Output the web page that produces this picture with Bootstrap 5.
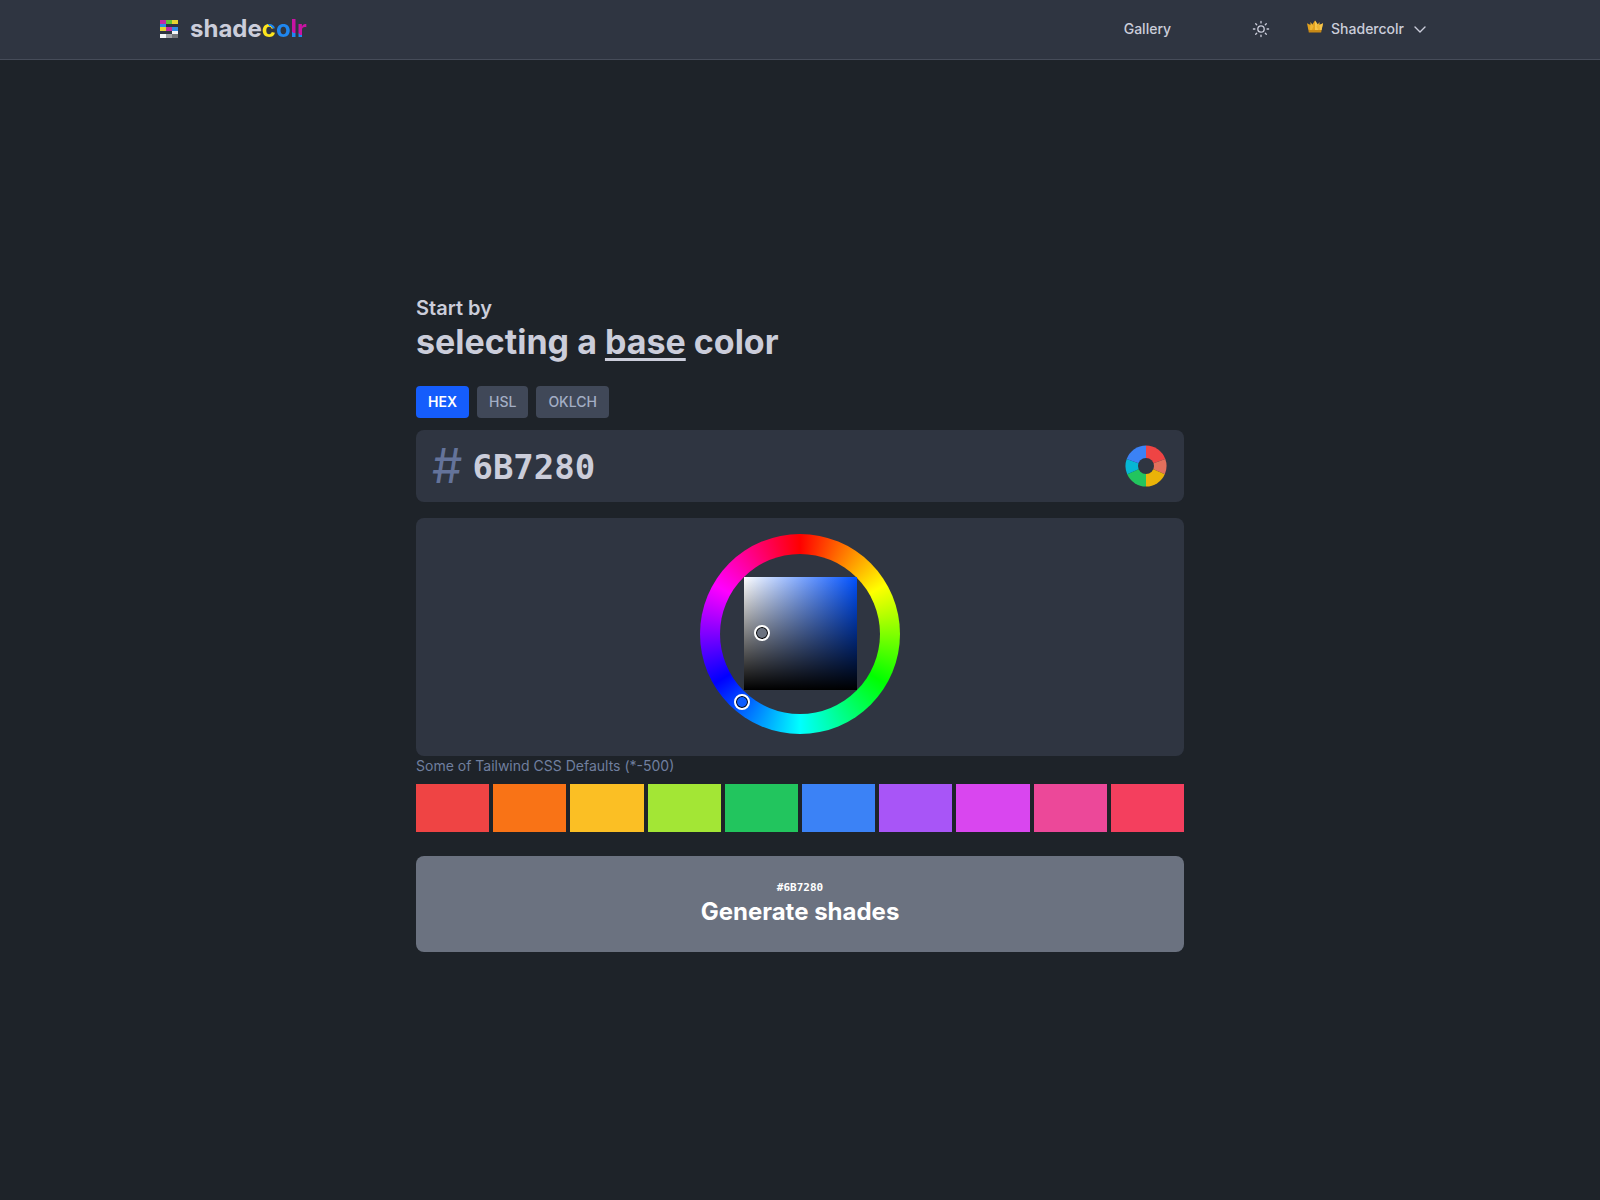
<!DOCTYPE html>
<html lang="en" data-bs-theme="dark">
<head>
<meta charset="utf-8">
<meta name="viewport" content="width=device-width, initial-scale=1">
<title>shadecolr</title>
<link rel="stylesheet" href="https://cdn.jsdelivr.net/npm/bootstrap@5.3.0/dist/css/bootstrap.min.css">
<style>
  :root { --ink: #cbcdda; --panel: #2f3541; --muted: #707f9f; }
  body { font-family: Inter, sans-serif; background: #1e2329; color: var(--ink); font-size: 14px; line-height: 20px; }
  .site-bar { background: var(--panel); border-bottom: 1px solid #464c59; height: 60px; padding: 0 0 2px; }
  .site-inner { max-width: 1280px; }
  .site-bar a, .site-bar button { color: var(--ink); font-weight: 500; text-decoration: none; font-size: 14px; line-height: 20px; }
  .site-bar .wordmark { font-size: 24px; line-height: 32px; font-weight: 700; }
  .tint { background-clip: text; -webkit-background-clip: text; color: transparent; }
  .tint-c { background-image: linear-gradient(40deg, #fde51d 58%, #1f87f0 58%); }
  .tint-o { background-image: linear-gradient(#1f87f0, #1f87f0); }
  .tint-l { background-image: linear-gradient(10deg, #1f87f0 36%, #c913a3 36%); }
  .tint-r { background-image: linear-gradient(30deg, #1f87f0 30%, #c913a3 30%); }
  .theme-btn { margin-left: 80px; margin-right: 36px; }
  .account-btn { margin-right: 12px; }
  .picker { max-width: 768px; padding: 0 0 14px; }
  .page-title { color: inherit; }
  .kicker { font-size: 20px; line-height: 28px; font-weight: 600; }
  .headline { font-size: 34px; line-height: 40px; font-weight: 700; }
  .headline u { text-decoration-thickness: 3px; text-underline-offset: 4px; }
  .mode-btn { --bs-btn-font-size: 14px; --bs-btn-line-height: 20px; --bs-btn-padding-x: 12px; --bs-btn-padding-y: 6px; --bs-btn-border-width: 0; --bs-btn-border-radius: 4px; --bs-btn-font-weight: 500;
    --bs-btn-bg: #404858; --bs-btn-color: #a3aec5; --bs-btn-active-bg: #155dfc; --bs-btn-active-color: #fff; --bs-btn-hover-bg: #4a5366; --bs-btn-hover-color: #fff; }
  .mode-btn.active { --bs-btn-font-weight: 600; }
  .panel-box { background: var(--panel); border-radius: 8px; }
  .hash { font-size: 48px; line-height: 48px; margin: 4px 10px 4px 0; color: #64739a; }
  .hex-field, .hex-field:focus { font-family: "DejaVu Sans Mono", monospace; font-size: 34px; line-height: 40px; font-weight: 700; color: var(--ink); background: transparent; border: 0; padding: 2px 0 0; box-shadow: none; }
  .wheel-panel { padding: 16px 0 22px; }
  .hue-ring { width: 200px; height: 200px; border-radius: 50%; position: relative; background: conic-gradient(red, yellow, lime, cyan, blue, magenta, red); }
  .hue-hole { position: absolute; inset: 20px; border-radius: 50%; background: var(--panel); }
  .shade-square { position: absolute; inset: 43px 43px 44px 44px; background: linear-gradient(to top, #000, transparent), linear-gradient(to right, #fff, #0051ff); }
  .knob { position: absolute; width: 16px; height: 16px; border: 2px solid #fff; border-radius: 50%; box-shadow: inset 0 0 0 1px #000; }
  .knob-shade { left: 54px; top: 91px; background: #6b7280; }
  .knob-hue { left: 34px; top: 160px; background: #0a5cff; }
  .caption-line { color: var(--muted); }
  .swatch { height: 48px; border: 0; padding: 0; }
  .generate, .generate:hover { background: #6b7280; color: #fff; border: 0; border-radius: 8px; padding: 24px; }
  .generate-hex { font-family: "DejaVu Sans Mono", monospace; font-size: 11px; line-height: 16px; font-weight: 700; }
  .generate-text { font-size: 24px; line-height: 32px; font-weight: 700; }
</style>
</head>
<body class="min-vh-100 d-flex flex-column">
<header class="site-bar navbar">
  <nav class="site-inner container-fluid p-0 flex-nowrap">
    <a class="d-flex align-items-center" href="#">
      <svg width="18" height="18" viewBox="0 0 18 18" shape-rendering="crispEdges" aria-hidden="true">
        <path fill="#c32ba5" d="M0 0h6v4H0zM6 7h6v4H6z"/><path fill="#62c435" d="M6 0h6v4H6z"/><path fill="#e6d431" d="M12 0h6v4h-6zM0 7h6v4H0z"/>
        <path fill="#2f8be6" d="M0 4h6v3H0zM12 7h6v4h-6z"/><path fill="#f4f5f7" d="M12 11h6v3h-6zM0 14h6v4H0z"/><path fill="#a2a4a9" d="M6 14h6v4H6z"/><path fill="#75777b" d="M12 14h6v4h-6z"/>
      </svg>
      <span class="wordmark ms-2 ps-1">shade<span class="tint tint-c">c</span><span class="tint tint-o">o</span><span class="tint tint-l">l</span><span class="tint tint-r">r</span></span>
    </a>
    <div class="d-flex align-items-center">
      <a href="#">Gallery</a>
      <button class="theme-btn btn p-0 border-0 d-flex" type="button" aria-label="Switch theme">
        <svg width="20" height="20" viewBox="0 0 20 20" fill="none" stroke="currentColor" stroke-width="1.3" stroke-linecap="round" aria-hidden="true"><circle cx="10" cy="10" r="3.2"/><path d="M10 2.4v1.5M10 16.1v1.5M2.4 10h1.5M16.1 10h1.5M4.7 4.7l1 1M14.3 14.3l1 1M4.7 15.3l1-1M14.3 5.7l1-1"/></svg>
      </button>
      <button class="account-btn btn p-0 border-0 d-flex align-items-center gap-2" type="button">
        <svg class="mb-1" width="16" height="13" viewBox="0 0 16 13" aria-hidden="true"><path fill="#e2a21d" d="M0 3.2l4.6 2.4L8 .4l3.4 5.2L16 3.2 14.6 10H1.4z"/><path fill="#f6c64c" d="M8 .4l3.4 5.2L16 3.2 14.6 10H8z"/><path fill="#edb534" d="M3.6 2l3 4.6L4.8 10H3zM12.4 2l-3 4.6 1.8 3.4h1.8z"/><path fill="#c98a16" d="M1.4 10h13.2l-.4 2.6H1.8z"/></svg>
        <span>Shadercolr</span>
        <svg width="16" height="16" viewBox="0 0 16 16" fill="none" stroke="currentColor" stroke-width="1.4" stroke-linecap="round" stroke-linejoin="round" aria-hidden="true"><path d="M3 6l5 5 5-5"/></svg>
      </button>
    </div>
  </nav>
</header>
<main class="picker container-fluid flex-grow-1 d-flex flex-column justify-content-center">
  <h1 class="page-title mb-4"><span class="kicker d-block">Start by</span><span class="headline d-block">selecting a <u>base</u> color</span></h1>
  <div class="d-flex gap-2 mb-2 pb-1">
    <button class="mode-btn btn active" type="button">HEX</button>
    <button class="mode-btn btn" type="button">HSL</button>
    <button class="mode-btn btn" type="button">OKLCH</button>
  </div>
  <div class="panel-box d-flex align-items-center px-3 mb-3 py-2">
    <label class="hash" for="hex">#</label>
    <input class="hex-field form-control flex-grow-1" id="hex" type="text" value="6B7280" maxlength="6" spellcheck="false">
    <button class="btn p-0 border-0 d-flex" type="button" aria-label="Toggle color wheel">
      <svg width="43" height="42" viewBox="-21 -21 43 42" aria-hidden="true">
        <path fill="#ef4444" d="M0 0V-20.5A20.5 20.5 0 0 1 19.3-7z"/><path fill="#e2705c" d="M0 0L19.3-7A20.5 20.5 0 0 1 18.8 8.2z"/><path fill="#eab308" d="M0 0L18.8 8.2A20.5 20.5 0 0 1 0 20.5z"/>
        <path fill="#22c55e" d="M0 0V20.5A20.5 20.5 0 0 1-18.8 8.2z"/><path fill="#06b6d4" d="M0 0L-18.8 8.2A20.5 20.5 0 0 1-19.3-7z"/><path fill="#3b82f6" d="M0 0L-19.3-7A20.5 20.5 0 0 1 0-20.5z"/><circle r="8" fill="#2f3541"/>
      </svg>
    </button>
  </div>
  <div class="panel-box wheel-panel d-flex justify-content-center">
    <div class="hue-ring">
      <div class="hue-hole"></div>
      <div class="shade-square"></div>
      <span class="knob knob-shade"></span>
      <span class="knob knob-hue"></span>
    </div>
  </div>
  <div class="caption-line mb-2">Some of Tailwind CSS Defaults (*-500)</div>
  <div class="d-flex gap-1 mb-4">
    <button class="swatch flex-fill" type="button" aria-label="red" style="background:#ef4444"></button>
    <button class="swatch flex-fill" type="button" aria-label="orange" style="background:#f97316"></button>
    <button class="swatch flex-fill" type="button" aria-label="amber" style="background:#fbbf24"></button>
    <button class="swatch flex-fill" type="button" aria-label="lime" style="background:#a3e635"></button>
    <button class="swatch flex-fill" type="button" aria-label="green" style="background:#22c55e"></button>
    <button class="swatch flex-fill" type="button" aria-label="blue" style="background:#3b82f6"></button>
    <button class="swatch flex-fill" type="button" aria-label="purple" style="background:#a855f7"></button>
    <button class="swatch flex-fill" type="button" aria-label="fuchsia" style="background:#d946ef"></button>
    <button class="swatch flex-fill" type="button" aria-label="pink" style="background:#ec4899"></button>
    <button class="swatch flex-fill" type="button" aria-label="rose" style="background:#f43f5e"></button>
  </div>
  <button class="generate btn w-100" type="button"><span class="generate-hex d-block">#6B7280</span><span class="generate-text d-block">Generate shades</span></button>
</main>
<script src="https://cdn.jsdelivr.net/npm/bootstrap@5.3.0/dist/js/bootstrap.bundle.min.js"></script>
</body>
</html>
